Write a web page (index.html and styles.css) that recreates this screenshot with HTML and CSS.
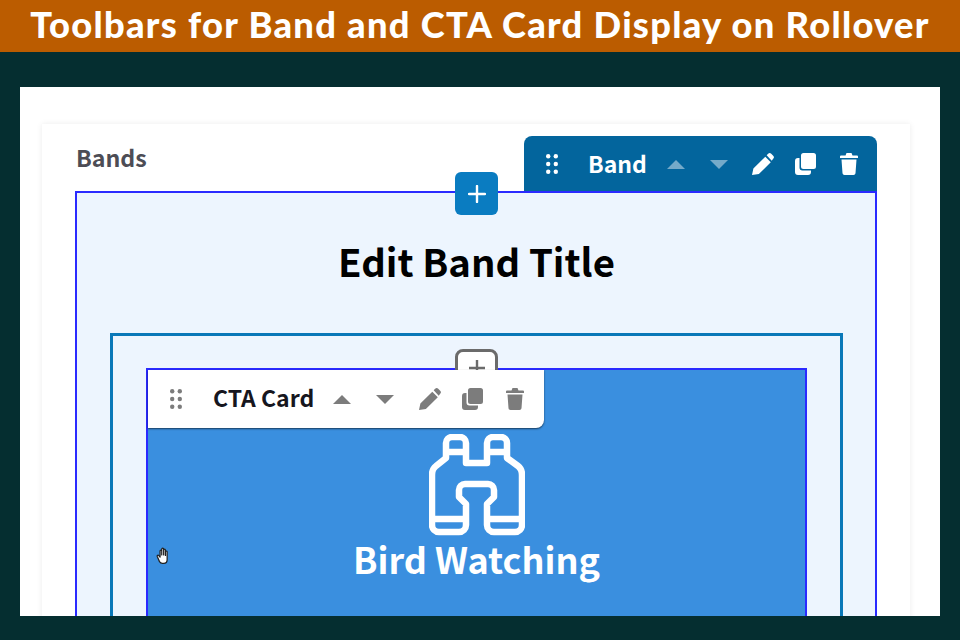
FILE: index.html
```html
<!DOCTYPE html>
<html lang="en">
<head>
<meta charset="utf-8">
<title>Toolbars for Band and CTA Card</title>
<link rel="stylesheet" href="styles.css">
</head>
<body>
<header class="banner">Toolbars for Band and CTA Card Display on Rollover</header>
<main class="frame">
  <section class="card">
    <h2 class="card-label">Bands</h2>
    <div class="toolbar toolbar-band">
      <svg class="ico grip" viewBox="0 0 12 20"><g fill="currentColor"><circle cx="2.200" cy="2.200" r="2.200"/><circle cx="9.800" cy="2.200" r="2.200"/><circle cx="2.200" cy="10" r="2.200"/><circle cx="9.800" cy="10" r="2.200"/><circle cx="2.200" cy="17.800" r="2.200"/><circle cx="9.800" cy="17.800" r="2.200"/></g></svg>
      <span class="tool-name">Band</span>
      <svg class="ico tri dim" viewBox="0 0 18 9"><path d="M9 0l9 9H0z" fill="currentColor"/></svg>
      <svg class="ico tri dim" viewBox="0 0 18 9"><path d="M0 0h18L9 9z" fill="currentColor"/></svg>
      <svg class="ico pen" viewBox="0 0 24 24"><path fill="currentColor" d="M0 24l1.500-7L14.500 4l6 6L7.500 23zM16 2.500l1.600-1.600a2.400 2.400 0 0 1 3.400 0l2.100 2.100a2.400 2.400 0 0 1 0 3.400L21.500 8.500z"/></svg>
      <svg class="ico copy" viewBox="0 0 21 22"><path fill="currentColor" d="M6 2.500A2.500 2.500 0 0 1 8.500 0h10A2.500 2.500 0 0 1 21 2.500v11a2.500 2.500 0 0 1-2.500 2.500h-10A2.500 2.500 0 0 1 6 13.500zM0 8a3 3 0 0 1 3-3h1.500v9.500a3 3 0 0 0 3 3H16V19a3 3 0 0 1-3 3H3a3 3 0 0 1-3-3z"/></svg>
      <svg class="ico trash" viewBox="0 0 18 22"><path fill="currentColor" d="M6.500 0h5l1 2.500H17a1 1 0 0 1 1 1V5H0V3.500a1 1 0 0 1 1-1h4.500zM1.500 6.500h15l-1 13.700A2 2 0 0 1 13.500 22h-9a2 2 0 0 1-2-1.800z"/></svg>
    </div>
    <div class="band">
      <button class="add add-band" type="button"><svg viewBox="0 0 18 18"><path d="M9 1v16M1 9h16" stroke="currentColor" stroke-width="2.400" stroke-linecap="round"/></svg></button>
      <h1 class="band-title">Edit Band Title</h1>
      <div class="cta-outer">
        <button class="add add-card" type="button"><svg viewBox="0 0 18 18"><path d="M9 1v16M1 9h16" stroke="currentColor" stroke-width="2.400"/></svg></button>
        <div class="cta">
          <div class="toolbar toolbar-card">
            <svg class="ico grip" viewBox="0 0 12 20"><g fill="currentColor"><circle cx="2.200" cy="2.200" r="2.200"/><circle cx="9.800" cy="2.200" r="2.200"/><circle cx="2.200" cy="10" r="2.200"/><circle cx="9.800" cy="10" r="2.200"/><circle cx="2.200" cy="17.800" r="2.200"/><circle cx="9.800" cy="17.800" r="2.200"/></g></svg>
            <span class="tool-name">CTA Card</span>
            <svg class="ico tri" viewBox="0 0 18 9"><path d="M9 0l9 9H0z" fill="currentColor"/></svg>
            <svg class="ico tri" viewBox="0 0 18 9"><path d="M0 0h18L9 9z" fill="currentColor"/></svg>
            <svg class="ico pen" viewBox="0 0 24 24"><path fill="currentColor" d="M0 24l1.500-7L14.500 4l6 6L7.500 23zM16 2.500l1.600-1.600a2.400 2.400 0 0 1 3.400 0l2.100 2.100a2.400 2.400 0 0 1 0 3.400L21.500 8.500z"/></svg>
            <svg class="ico copy" viewBox="0 0 21 22"><path fill="currentColor" d="M6 2.500A2.500 2.500 0 0 1 8.500 0h10A2.500 2.500 0 0 1 21 2.500v11a2.500 2.500 0 0 1-2.500 2.500h-10A2.500 2.500 0 0 1 6 13.500zM0 8a3 3 0 0 1 3-3h1.500v9.500a3 3 0 0 0 3 3H16V19a3 3 0 0 1-3 3H3a3 3 0 0 1-3-3z"/></svg>
            <svg class="ico trash" viewBox="0 0 18 22"><path fill="currentColor" d="M6.500 0h5l1 2.500H17a1 1 0 0 1 1 1V5H0V3.500a1 1 0 0 1 1-1h4.500zM1.500 6.500h15l-1 13.700A2 2 0 0 1 13.500 22h-9a2 2 0 0 1-2-1.800z"/></svg>
          </div>
          <svg class="binoculars" viewBox="0 0 96 102"><path fill="none" stroke="currentColor" stroke-width="6.500" stroke-linejoin="round" d="M37 29H58V9a6 6 0 0 1 6-6h8a6 6 0 0 1 6 6V24L89 32Q93 35 93 41V91a7 7 0 0 1-7 7H65a7 7 0 0 1-7-7V70L65 63V56a6 6 0 0 0-6-6H36a6 6 0 0 0-6 6V63L37 70V91a7 7 0 0 1-7 7H10a7 7 0 0 1-7-7V41Q3 35 7 32L17 24V9a6 6 0 0 1 6-6h8a6 6 0 0 1 6 6zM17 18H37M58 18H78M3 85H37M58 85H93"/></svg>
          <p class="cta-title">Bird Watching</p>
          <svg class="cursor" viewBox="0 0 14 16"><path fill="#fff" stroke="#222" stroke-width="1.100" stroke-linejoin="round" d="M3 13L1 8.500c-.4-1 .8-1.600 1.400-.8L3.500 9V3.500c0-1.100 1.500-1.100 1.500 0V7V2c0-1.200 1.700-1.200 1.700 0v5V2.800c0-1.100 1.600-1.100 1.600 0V7.500V4.300c0-1 1.500-1 1.500 0V11c0 2-1 3.500-3 3.500H5.500C4.500 14.500 3.600 14 3 13z"/></svg>
        </div>
      </div>
    </div>
  </section>
</main>
</body>
</html>
```
FILE: styles.css
```css
* { box-sizing: border-box; }
html, body { margin: 0; height: 640px; overflow: hidden; }
body {
  background: #052e30;
  display: flex;
  flex-direction: column;
  font-family: "Noto Sans CJK JP", "Noto Sans", sans-serif;
}
.banner {
  height: 52px;
  flex: none;
  background: #bb5c00;
  color: #fff;
  font-family: Lato, sans-serif;
  font-weight: 900;
  font-size: 36.300px;
  letter-spacing: 1.280px;
  line-height: 48px;
  text-align: center;
  white-space: nowrap;
}
.frame {
  flex: none;
  height: 529px;
  margin: 35px 20px 0;
  background: #fff;
  overflow: hidden;
  padding: 37px 30px 0 22px;
}
.card {
  position: relative;
  height: 600px;
  padding: 0 33px;
  background: #fff;
  box-shadow: 0 0 6px rgba(0, 0, 0, .08);
}
.card-label {
  margin: 0;
  height: 67px;
  padding: 17px 0 0 1px;
  font-size: 23.200px;
  line-height: 32px;
  font-weight: 700;
  color: #4d4d55;
}
.toolbar {
  position: absolute;
  display: flex;
  align-items: center;
}
.toolbar-band {
  top: 12px;
  right: 33px;
  width: 353px;
  height: 56px;
  background: #03659d;
  color: #fff;
  border-radius: 8px 8px 0 0;
}
.toolbar-card {
  top: 0;
  left: 0;
  z-index: 2;
  width: 396px;
  height: 58px;
  background: #fff;
  color: #7c7c7c;
  border-radius: 0 0 8px 0;
  box-shadow: 0 1px 2px rgba(0, 0, 0, .6);
}
.tool-name {
  position: absolute;
  top: 12px;
  font-size: 23px;
  line-height: 30px;
  font-weight: 700;
}
.toolbar-card .tool-name { color: #16161e; }
.ico { position: absolute; display: block; }
.grip { width: 12px; height: 20px; left: 22px; }
.tri { width: 18px; height: 9px; }
.tri.dim { opacity: .45; }
.pen { width: 22px; height: 22px; }
.copy { width: 21px; height: 22px; }
.trash { width: 18px; height: 22px; }
.toolbar-band .tool-name { left: 64px; }
.toolbar-band .tri:nth-of-type(2) { left: 143px; }
.toolbar-band .tri:nth-of-type(3) { left: 186px; }
.toolbar-band .pen { left: 228px; }
.toolbar-band .copy { left: 271px; }
.toolbar-band .trash { left: 316px; }
.toolbar-card .tool-name { left: 65px; }
.toolbar-card .tri:nth-of-type(2) { left: 185px; }
.toolbar-card .tri:nth-of-type(3) { left: 228px; }
.toolbar-card .pen { left: 271px; }
.toolbar-card .copy { left: 314px; }
.toolbar-card .trash { left: 358px; }
.band {
  position: relative;
  height: 500px;
  padding: 0 32px 0 33px;
  background: #edf5fe;
  border: 2px solid #2a2aff;
  border-bottom: 0;
}
.band-title {
  margin: 0;
  height: 140px;
  padding-top: 41px;
  text-align: center;
  font-size: 38.300px;
  line-height: 54px;
  font-weight: 700;
  color: #000;
}
.add {
  position: absolute;
  display: flex;
  align-items: center;
  justify-content: center;
  width: 43px;
  height: 43px;
  padding: 0;
  border-radius: 6px;
  left: 378px;
}
.add svg { width: 18px; height: 18px; }
.add-band {
  top: -21px;
  border: 0;
  background: #0a7cc1;
  color: #fff;
}
.add-card {
  top: 13px;
  z-index: 1;
  background: #fff;
  border: 3px solid #6b6b6b;
  border-radius: 8px;
  color: #6b6b6b;
  left: 342px;
}
.add-card svg { margin-bottom: 5px; }
.cta-outer {
  position: relative;
  height: 400px;
  padding: 32px 33px 0;
  border: 3px solid #0a78b8;
  border-bottom: 0;
}
.cta {
  position: relative;
  height: 360px;
  background: #3a8fdf;
  border: 2px solid #2a2aff;
  border-bottom: 0;
  display: flex;
  flex-direction: column;
  align-items: center;
  color: #fff;
  padding-top: 64px;
}
.binoculars { width: 96px; height: 102px; display: block; }
.cta-title {
  margin: 0;
  font-size: 36px;
  line-height: 44px;
  font-weight: 700;
}
.cursor {
  position: absolute;
  left: 8px;
  top: 177px;
  width: 16px;
  height: 18px;
}
```
